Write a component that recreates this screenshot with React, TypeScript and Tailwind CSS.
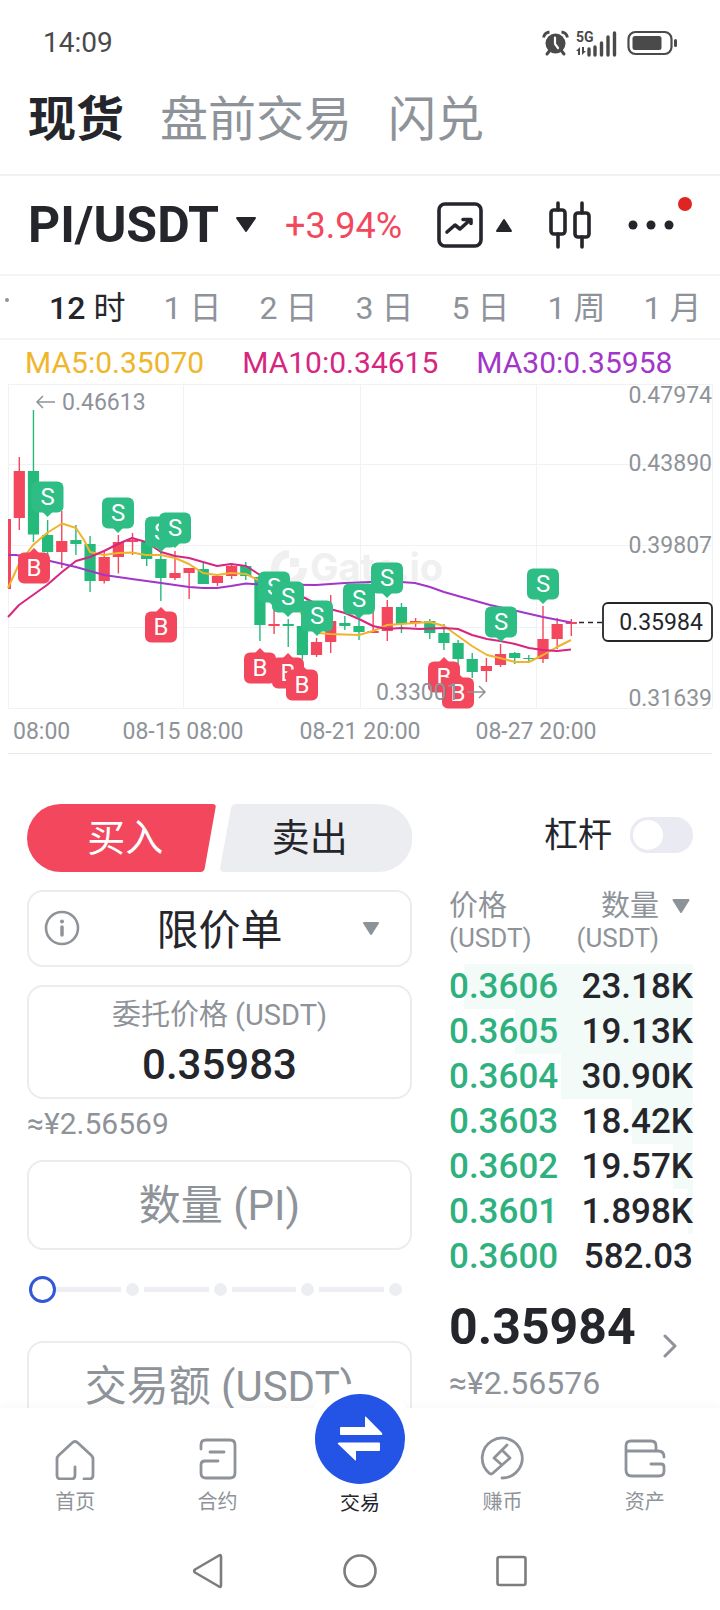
import { useState } from 'react';
import type { ReactNode } from 'react';

type Candle = [high: number, low: number, top: number, bottom: number, up: boolean];
type Marker = { x: number; y: number; side: 'S' | 'B' };

const RED = '#f2475c';
const GREEN = '#26b97c';

const MARKETS = ['现货', '盘前交易', '闪兑'];

const INTERVALS = [
  { n: '12', unit: '时' },
  { n: '1', unit: '日' },
  { n: '2', unit: '日' },
  { n: '3', unit: '日' },
  { n: '5', unit: '日' },
  { n: '1', unit: '周' },
  { n: '1', unit: '月' },
];

// wick high, wick low, body top, body bottom, rising
const CANDLES: Candle[] = [
  [77, 150, 91, 138, true],
  [30, 162, 91, 154.5, false],
  [140, 175, 155, 172, false],
  [131, 188, 161, 172, true],
  [145, 175, 160, 164, false],
  [156, 212, 164, 201, false],
  [170, 203.5, 177, 201, true],
  [155, 193.5, 162, 177, true],
  [153, 175, 160, 162, true],
  [160, 186, 162, 179, false],
  [170, 221, 179, 198, false],
  [171, 200, 193, 198, true],
  [188, 219, 188, 193, true],
  [183, 204, 189, 204, false],
  [195, 206, 196, 203, true],
  [185, 199, 186, 196, true],
  [182, 200, 186, 196, false],
  [197, 261, 197, 245, false],
  [225, 254, 244, 246, true],
  [239, 267, 244, 246, false],
  [245, 279, 246, 275, false],
  [258, 277, 262, 275, true],
  [215, 273, 241, 262, true],
  [236, 250, 243, 246, false],
  [240, 260, 246, 252, false],
  [225, 253, 251, 253, true],
  [220, 261, 227, 251, true],
  [223, 253, 227, 244, false],
  [238, 247, 241, 243, true],
  [239, 259, 241, 253, false],
  [244, 270, 253, 263, false],
  [260, 284, 263, 279, false],
  [273, 298, 279, 292, false],
  [278, 302, 286, 291, true],
  [264, 287, 274, 285, true],
  [272, 284, 273, 278, false],
  [275, 282, 278, 279, false],
  [226, 283, 259, 279, true],
  [238, 269, 244, 259, true],
  [239, 256, 242, 244, true],
];

const MARKERS: Marker[] = [
  { x: 47.5, y: 117, side: 'S' },
  { x: 118, y: 133, side: 'S' },
  { x: 161, y: 152, side: 'S' },
  { x: 175, y: 148, side: 'S' },
  { x: 274, y: 207, side: 'S' },
  { x: 288, y: 217, side: 'S' },
  { x: 317, y: 236, side: 'S' },
  { x: 359, y: 219, side: 'S' },
  { x: 387, y: 198, side: 'S' },
  { x: 501, y: 242, side: 'S' },
  { x: 543, y: 204, side: 'S' },
  { x: 34, y: 188, side: 'B' },
  { x: 161, y: 247, side: 'B' },
  { x: 260, y: 288, side: 'B' },
  { x: 288, y: 293, side: 'B' },
  { x: 302, y: 305, side: 'B' },
  { x: 444, y: 297, side: 'B' },
  { x: 458, y: 313, side: 'B' },
];

const MA5 =
  '8,208 19,184 33,165 47,153 62,143.5 76,148 84,160 90,172 104,175 118,173 132,172.5 146,175 161,175 175,178 189,184 203,193 217,195 231,193 246,194 260,201 274,205 288,213 295,222 302,235 310,248 318,253 330,254 359,255 373,251 387,245 401,244 430,242 444,246 458,256 472,266 487,275 500,278 515,282 529,282 543,275 557,267 571,260';
const MA10 =
  '8,237 19,225 33,215 47,205 62,192 76,181 90,177 104,171 118,164 132,158 146,162 161,172 175,176 189,178 203,182 217,186 231,184 246,186 260,195 274,203 288,211 305,218 320,226 330,229 345,233 359,239 373,246 387,249 401,248 420,249 444,248 458,249 472,255 487,259 500,261 515,264 529,268 543,270 557,271 571,269.5';
const MA30 =
  '8,175 16,175 50,181 76,187 90,191 104,195 132,199 161,203 189,207 203,208 217,208 231,206 246,203.5 260,204.5 316,205 345,203 370,202 401,202 415,203 430,207 444,212 458,216 490,225 517,231 543,237 571,242.5';

const BIDS = [
  { price: '0.3606', amount: '23.18K', depth: 94 },
  { price: '0.3605', amount: '19.13K', depth: 73 },
  { price: '0.3604', amount: '30.90K', depth: 54 },
  { price: '0.3603', amount: '18.42K', depth: 25 },
  { price: '0.3602', amount: '19.57K', depth: 8 },
  { price: '0.3601', amount: '1.898K', depth: 2 },
  { price: '0.3600', amount: '582.03', depth: 0 },
];

function StatusBar() {
  return (
    <div className="flex h-[72px] shrink-0 items-center justify-between pt-[13px] pr-[43px] pl-[43px] text-[#4a4a4a]">
      <span className="text-[28px] leading-8">14:09</span>
      <svg width="136" height="28" viewBox="0 0 136 28" fill="currentColor" aria-hidden="true">
        <circle cx="14.500" cy="14.500" r="10" />
        <path d="M2.500 8.500a7 7 0 0 1 6-5.500M26.500 8.500a7 7 0 0 0-6-5.500" fill="none" stroke="currentColor" strokeWidth="2.800" />
        <path d="M6 25l4-5M23 25l-4-5" stroke="currentColor" strokeWidth="3" strokeLinecap="round" />
        <path d="M14 8.500v6.500l3 4" fill="none" stroke="#fff" strokeWidth="2.200" strokeLinecap="round" />
        <text x="35" y="13" fontSize="14" fontWeight="700">5G</text>
        <path d="M35 22l4-4v8h-2v-4zM45 22l-4 4v-8h2v4z" />
        <path d="M48 26v-6M54 26v-8M60.500 26v-12M67 26V8M73.500 26V4" stroke="currentColor" strokeWidth="3.400" strokeLinecap="round" />
        <rect x="87.500" y="3" width="43" height="22" rx="7" fill="none" stroke="currentColor" strokeWidth="2.200" />
        <rect x="91.500" y="7" width="29" height="14" rx="2.500" />
        <rect x="133" y="10" width="3" height="8" rx="1.500" />
      </svg>
    </div>
  );
}

function MarkerTag({ x, y, side }: Marker) {
  const isSell = side === 'S';
  return (
    <g>
      <path
        d={isSell ? `M${x - 5} ${y + 15}h10l-5 5z` : `M${x - 5} ${y - 15}h10l-5-5z`}
        fill={isSell ? '#2dbd85' : RED}
      />
      <rect x={x - 16} y={y - 15.5} width="32" height="31" rx="6" fill={isSell ? '#2dbd85' : RED} />
      <text x={x} y={y + 8} fontSize="24" textAnchor="middle" fill="#fff">
        {side}
      </text>
    </g>
  );
}

function PriceChart() {
  return (
    <svg viewBox="0 0 720 376" className="block w-full" role="img" aria-label="PI/USDT">
      <g stroke="#f1f2f3" strokeWidth="1">
        <path d="M8 4.500H712M8 84.500H712M8 165.500H712M8 247.500H712M8 328.500H712" />
        <path d="M8.500 4V328M183.500 4V328M360.500 4V328M536.500 4V328M712.500 4V328" />
      </g>
      <path d="M8 373.500H712" stroke="#e6e8ea" />

      <g fill="#f0f0f1">
        <path
          fillRule="evenodd"
          d="M289 170a18 18 0 1 0 18 18h-8a10 10 0 1 1-10-10zM290 178h9v9h-9z"
        />
        <text x="310" y="201" fontSize="38" fontWeight="700" fontFamily="Inter">Gate.io</text>
      </g>

      <rect x="8" y="139" width="3" height="70" fill={RED} />
      {CANDLES.map(([high, low, top, bottom, up], i) => {
        const cx = 19.3 + i * 14.154;
        return (
          <g key={i} fill={up ? RED : GREEN}>
            <rect x={cx - 0.7} y={high} width="1.400" height={low - high} />
            <rect x={cx - 5.6} y={top} width="11.200" height={bottom - top} />
          </g>
        );
      })}

      <g fill="none" strokeWidth="2" strokeLinejoin="round">
        <polyline points={MA5} stroke="#f0b32c" />
        <polyline points={MA10} stroke="#d6267f" />
        <polyline points={MA30} stroke="#a236c8" />
      </g>

      {MARKERS.map((m) => (
        <MarkerTag key={`${m.side}${m.x}`} {...m} />
      ))}

      <g fill="none" stroke="#8e9399" strokeWidth="1.500">
        <path d="M55 22H37M43 16l-6 6 6 6" />
        <path d="M467 312h18M479 306l6 6-6 6" />
      </g>

      <g fontSize="23" fill="#8e9399">
        <text x="62" y="30">0.46613</text>
        <text x="376" y="320">0.33001</text>
        <g textAnchor="end">
          <text x="712" y="23">0.47974</text>
          <text x="712" y="91">0.43890</text>
          <text x="712" y="173">0.39807</text>
          <text x="712" y="326">0.31639</text>
        </g>
        <text x="13" y="359">08:00</text>
        <g textAnchor="middle">
          <text x="183" y="359">08-15 08:00</text>
          <text x="360" y="359">08-21 20:00</text>
          <text x="536" y="359">08-27 20:00</text>
        </g>
      </g>

      <path d="M579 242.500H602" stroke="#24262c" strokeWidth="1.600" strokeDasharray="5 4" />
      <rect x="603" y="223" width="109" height="38" rx="5" fill="#fff" stroke="#24262c" strokeWidth="1.800" />
      <text x="661" y="250" fontSize="23" textAnchor="middle" fill="#24262c">0.35984</text>
    </svg>
  );
}

function SideSwitch() {
  const [side, setSide] = useState('buy');
  return (
    <div className="flex gap-1">
      <button
        aria-pressed={side === 'buy'}
        onClick={() => setSide('buy')}
        className="relative h-[68px] flex-1 pl-2 text-[38px] leading-none text-white"
      >
        <svg viewBox="0 0 190 68" preserveAspectRatio="none" className="absolute inset-0 h-full w-full" aria-hidden="true">
          <path d="M34 0H187q4 0 3 4L179 65q-1 3-4 3H34a34 34 0 0 1 0-68z" fill={RED} />
        </svg>
        <span className="relative">买入</span>
      </button>
      <button
        aria-pressed={side === 'sell'}
        onClick={() => setSide('sell')}
        className="relative h-[68px] flex-1 pr-3 text-[38px] leading-none text-[#24262c]"
      >
        <svg viewBox="0 0 191 68" preserveAspectRatio="none" className="absolute inset-0 h-full w-full" aria-hidden="true">
          <path d="M157 0H16q-4 0-5 4L0 64q0 4 4 4H157a34 34 0 0 0 0-68z" fill="#ecedf0" />
        </svg>
        <span className="relative">卖出</span>
      </button>
    </div>
  );
}

function OrderForm() {
  return (
    <form className="flex min-w-0 flex-[385] flex-col">
      <SideSwitch />

      <div className="relative mt-[18px]">
        <select
          aria-label="限价单"
          className="h-[77px] w-full appearance-none rounded-2xl border-2 border-[#ebecee] bg-transparent pt-1 text-center text-[42px] text-[#24262c] [text-align-last:center]"
        >
          <option>限价单</option>
        </select>
        <svg width="36" height="36" viewBox="0 0 36 36" className="pointer-events-none absolute top-5 left-[17px]" fill="none" stroke="#8e9399" strokeWidth="2.600" strokeLinecap="round" aria-hidden="true">
          <circle cx="18" cy="18" r="16" />
          <path d="M18 17v8" strokeWidth="3.500" />
          <circle cx="18" cy="11.500" r="2" fill="#8e9399" stroke="none" />
        </svg>
        <svg width="18" height="14" viewBox="0 0 18 14" className="pointer-events-none absolute top-8 right-8" aria-hidden="true">
          <path d="M2 1h14L9 12z" fill="#8e9399" stroke="#8e9399" strokeWidth="2" strokeLinejoin="round" />
        </svg>
      </div>

      <div className="mt-[18px] flex h-[114px] flex-col items-center rounded-2xl border-2 border-[#ebecee] pt-2.5">
        <label htmlFor="price" className="text-[29px] leading-9 text-[#8e9399]">
          委托价格 (USDT)
        </label>
        <input
          id="price"
          defaultValue="0.35983"
          inputMode="decimal"
          className="h-[62px] w-full bg-transparent text-center text-[42px] font-medium text-[#24262c] outline-none"
        />
      </div>
      <p className="h-[61px] text-[30px] leading-[50px] text-[#8e9399]">≈¥2.56569</p>

      <input
        aria-label="数量 (PI)"
        placeholder="数量 (PI)"
        className="h-[90px] w-full rounded-2xl border-2 border-[#ebecee] bg-transparent text-center text-[42px] outline-none placeholder:text-[#8e9399]"
      />

      <div className="relative mt-6 mr-[5px] mb-[37px] ml-0.5 flex h-[30px] items-center">
        <span className="w-[27px]" />
        {[25, 50, 75, 100].map((stop) => (
          <span key={stop} className="flex flex-1 items-center gap-[5px] not-last:mr-[5px]">
            <span className="h-[5px] flex-1 bg-[#eceef1]" />
            <span className="size-[13px] rounded-full bg-[#eceef1]" />
          </span>
        ))}
        <input
          type="range"
          aria-label="百分比"
          defaultValue={0}
          className="absolute top-0 -right-[7px] left-0 h-[30px] appearance-none bg-transparent [&::-webkit-slider-thumb]:size-[27px] [&::-webkit-slider-thumb]:appearance-none [&::-webkit-slider-thumb]:rounded-full [&::-webkit-slider-thumb]:border-3 [&::-webkit-slider-thumb]:border-[#3158d8] [&::-webkit-slider-thumb]:bg-white"
        />
      </div>

      <input
        aria-label="交易额 (USDT)"
        placeholder="交易额 (USDT)"
        className="h-[90px] w-full rounded-2xl border-2 border-[#ebecee] bg-transparent text-center text-[42px] outline-none placeholder:text-[#8e9399]"
      />
    </form>
  );
}

function OrderBook() {
  return (
    <section className="flex min-w-0 flex-[244] flex-col">
      <label className="flex h-[62px] items-center justify-end gap-[18px] text-[34px] text-[#24262c]">
        杠杆
        <input
          type="checkbox"
          role="switch"
          className="relative h-9 w-[63px] appearance-none rounded-full bg-[#e9eaf2] before:absolute before:top-[3px] before:left-[3px] before:size-[30px] before:rounded-full before:bg-white checked:bg-[#26b97c] checked:before:left-[30px]"
        />
      </label>

      <table className="mt-[22px] w-full">
        <thead className="text-[#8e9399]">
          <tr className="align-top">
            <th className="h-[76px] pt-0.5 text-left font-normal">
              <span className="block text-[29px] leading-8">价格</span>
              <span className="block text-[26px] leading-8">(USDT)</span>
            </th>
            <th className="h-[76px] pt-0.5 pr-[34px] text-right font-normal">
              <span className="relative block text-[29px] leading-8">
                数量
                <svg width="20" height="16" viewBox="0 0 20 16" className="absolute top-2 -right-8" aria-hidden="true">
                  <path d="M2.500 2h15L10 14z" fill="#8e9399" stroke="#8e9399" strokeWidth="2" strokeLinejoin="round" />
                </svg>
              </span>
              <span className="block text-[26px] leading-8">(USDT)</span>
            </th>
          </tr>
        </thead>
        <tbody className="text-[35px] leading-[45px]">
          {BIDS.map((b) => (
            <tr
              key={b.price}
              style={{ backgroundImage: `linear-gradient(to left, #f3fbf8 ${b.depth}%, transparent ${b.depth}%)` }}
            >
              <td className="p-0 font-medium text-[#2fb17f]">{b.price}</td>
              <td className="p-0 text-right font-medium text-[#24262c]">{b.amount}</td>
            </tr>
          ))}
        </tbody>
      </table>

      <a href="#market" className="mt-[17px] flex items-center justify-between pr-4">
        <span>
          <span className="block text-[50px] leading-[62px] font-bold text-[#24262c]">0.35984</span>
          <span className="block text-[32px] leading-[50px] text-[#8e9399]">≈¥2.56576</span>
        </span>
        <svg width="14" height="24" viewBox="0 0 14 24" className="mb-3" fill="none" stroke="#8e9399" strokeWidth="3" strokeLinecap="round" strokeLinejoin="round" aria-hidden="true">
          <path d="M2 2l10 10L2 22" />
        </svg>
      </a>
    </section>
  );
}

function NavItem({ label, children }: { label: string; children: ReactNode }) {
  return (
    <a href="#" className="flex flex-col items-center gap-2 pt-7 text-[20px] leading-7 text-[#8e9399]">
      <svg width="44" height="44" viewBox="0 0 44 44" fill="none" stroke="currentColor" strokeWidth="2.800" strokeLinecap="round" strokeLinejoin="round" aria-hidden="true">
        {children}
      </svg>
      {label}
    </a>
  );
}

function BottomNav() {
  return (
    <nav className="relative z-10 shrink-0 bg-white shadow-[0_-2px_8px_rgba(0,0,0,0.03)]">
      <div className="grid grid-cols-5 px-1">
        <NavItem label="首页">
          <path d="M22 31v8q0 4-4 4H8q-4 0-4-4V23q0-2 1.500-3.500L19 7q3-3 6 0l13.500 12.500Q40 21 40 23v16q0 4-4 4h-5" />
        </NavItem>
        <NavItem label="合约">
          <path d="M5 13V9q0-5 5-5h24q5 0 5 5v28q0 5-5 5H10q-5 0-5-5V29q0-4 4-4h13M14 16h14" />
        </NavItem>
        <a href="#" className="relative flex flex-col items-center pt-[81px] text-[20px] leading-7 text-[#24262c]">
          <span className="absolute -top-[25px] left-1/2 flex size-[112px] -translate-x-1/2 items-center justify-center rounded-full bg-white">
            <span className="flex size-[90px] items-center justify-center rounded-full bg-[#2354e6]">
              <svg width="46" height="46" viewBox="0 0 46 46" fill="#fff" aria-hidden="true">
                <path d="M4 11h24V1q0-1 1-.3L45 17q1 2-1 2H4q-1 0-1-1v-6q0-1 1-1z" />
                <path d="M42 35H19v9q0 1-1 .3L1 28q-1-1 1-1.500h40q1 0 1 1V34q0 1-1 1z" />
              </svg>
            </span>
          </span>
          交易
        </a>
        <NavItem label="赚币">
          <path d="M22 42A20 20 0 1 0 9 37q2 2 4 0l17-15-8-8-8 8 8 7M22 14l5-5" />
        </NavItem>
        <NavItem label="资产">
          <path d="M3 15h32q6 0 6 6M3 15V10q0-5 5-5h20q5 0 5 5v5M3 15v19q0 6 6 6h27q5 0 5-5v-4q0-3-3-3H28" />
        </NavItem>
      </div>

      <div className="mt-9 flex items-center justify-center gap-[118px] pb-[21px] text-[#7d7d7d]">
        <button aria-label="返回">
          <svg width="34" height="36" viewBox="0 0 34 36" fill="none" stroke="currentColor" strokeWidth="2.600" strokeLinejoin="round">
            <path d="M30 3.500v29q0 2-2 1L4 19.500q-1.500-1.500 0-3L28 2.500q2-1 2 1z" />
          </svg>
        </button>
        <button aria-label="主屏幕">
          <svg width="34" height="36" viewBox="0 0 34 36" fill="none" stroke="currentColor" strokeWidth="2.600">
            <circle cx="17" cy="18" r="15.500" />
          </svg>
        </button>
        <button aria-label="最近任务">
          <svg width="34" height="36" viewBox="0 0 34 36" fill="none" stroke="currentColor" strokeWidth="2.600">
            <rect x="2.500" y="4" width="28" height="28" rx="2" />
          </svg>
        </button>
      </div>
    </nav>
  );
}

export default function App() {
  const [market, setMarket] = useState(0);
  const [interval, setInterval] = useState(0);

  return (
    <div className="flex h-screen flex-col overflow-hidden bg-white font-['Roboto','Noto_Sans_CJK_SC',sans-serif]">
      <StatusBar />

      <main className="min-h-0 flex-1 overflow-y-auto [scrollbar-width:none]">
        <div className="flex h-[104px] items-center gap-9 border-b-2 border-[#f0f1f2] px-7 pb-1.5 text-[48px] leading-none">
          {MARKETS.map((m, i) => (
            <button
              key={m}
              onClick={() => setMarket(i)}
              className={i === market ? 'font-bold text-[#24262c]' : 'text-[#8e9399]'}
            >
              {m}
            </button>
          ))}
        </div>

        <div className="relative flex h-[100px] items-center border-b-2 border-[#f3f4f5] pr-[45px] pl-7 text-[#24262c]">
          <button className="flex items-center gap-4">
            <span className="text-[50px] font-bold">PI/USDT</span>
            <svg width="22" height="18" viewBox="0 0 22 18" aria-hidden="true">
              <path d="M2 2h18l-9 13z" fill="currentColor" stroke="currentColor" strokeWidth="2" strokeLinejoin="round" />
            </svg>
          </button>
          <span className="ml-7 pt-0.5 text-[36px] text-[#f2475c]">+3.94%</span>
          <div className="flex flex-1 items-center justify-end">
            <button aria-label="图表" className="flex items-center gap-[11px]">
              <svg width="48" height="48" viewBox="0 0 48 48" fill="none" stroke="currentColor" strokeWidth="3.600" strokeLinecap="round" strokeLinejoin="round">
                <rect x="3" y="3" width="42" height="42" rx="6" />
                <path d="M11 31l8-7 5 4 10-9M27 18.500h8v4" />
              </svg>
              <svg width="18" height="16" viewBox="0 0 18 16">
                <path d="M2 14h14L9 3z" fill="currentColor" stroke="currentColor" strokeWidth="2" strokeLinejoin="round" />
              </svg>
            </button>
            <button aria-label="K线" className="ml-[33px]">
              <svg width="48" height="48" viewBox="0 0 48 48" fill="none" stroke="currentColor" strokeWidth="3.600" strokeLinecap="round">
                <rect x="5" y="9" width="14" height="24" rx="3" />
                <path d="M12 2v7M12 33v13" />
                <rect x="29" y="12" width="14" height="24" rx="3" />
                <path d="M36 2v10M36 36v10" />
              </svg>
            </button>
            <button aria-label="更多" className="ml-[33px]">
              <svg width="48" height="48" viewBox="0 0 48 48" fill="currentColor">
                <circle cx="6" cy="24" r="4.500" />
                <circle cx="24" cy="24" r="4.500" />
                <circle cx="42" cy="24" r="4.500" />
              </svg>
            </button>
          </div>
          <span className="absolute top-[21px] right-7 size-3.5 rounded-full bg-[#e02424]" />
        </div>

        <div className="relative flex h-16 items-center gap-[38px] overflow-hidden border-b-2 border-[#f3f4f5] pt-0.5 pl-[49px] text-[32px] leading-none">
          <span className="absolute top-[22px] left-[5px] h-1 w-1 rounded-full bg-[#8e9399]" />
          {INTERVALS.map(({ n, unit }, i) => (
            <button
              key={n + unit}
              onClick={() => setInterval(i)}
              className={i === interval ? 'flex gap-2 text-[#24262c]' : 'flex gap-2 text-[#8e9399]'}
            >
              <span className={i === interval ? 'font-medium' : ''}>{n}</span>
              <span>{unit}</span>
            </button>
          ))}
        </div>

        <div className="flex h-10 items-center gap-[38px] pt-1.5 pl-[25px] text-[30px] leading-8">
          <span className="text-[#efb62b]">MA5:0.35070</span>
          <span className="text-[#d6267f]">MA10:0.34615</span>
          <span className="text-[#a236c8]">MA30:0.35958</span>
        </div>

        <PriceChart />

        <div className="mt-12 flex gap-[37px] px-[27px]">
          <OrderForm />
          <OrderBook />
        </div>
      </main>

      <BottomNav />
    </div>
  );
}
